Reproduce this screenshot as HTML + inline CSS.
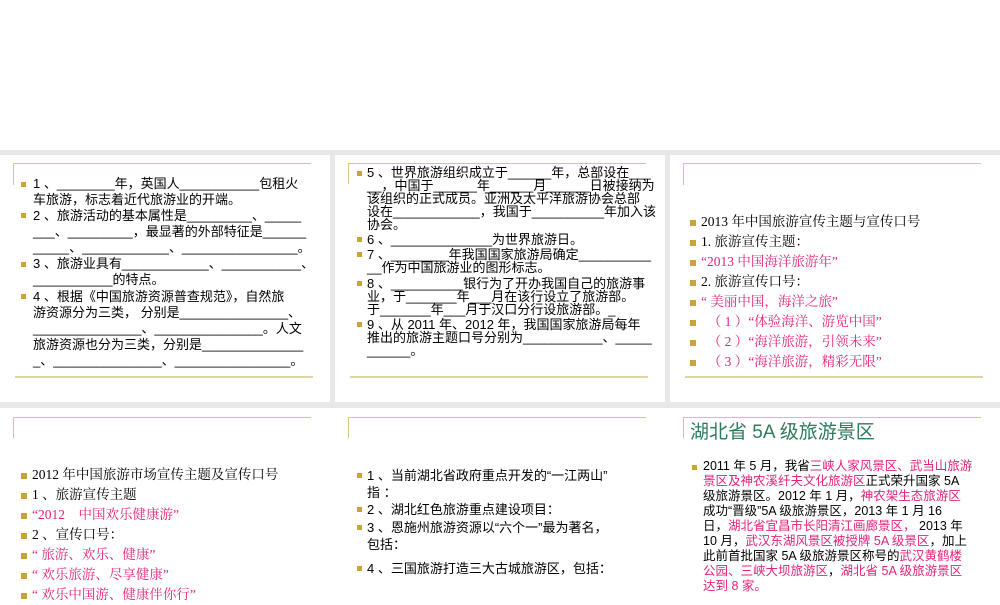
<!DOCTYPE html>
<html><head><meta charset="utf-8"><style>
*{margin:0;padding:0}
body{width:1000px;height:600px;background:#fff;position:relative;overflow:hidden;font-family:"Liberation Sans","Noto Sans CJK SC",sans-serif;color:#000}
.band{position:absolute;background:#e8e8e8}
.s{position:absolute;background:#fff;overflow:hidden}
.tl{position:absolute;height:1px;background:#d9c48a}
.vl{position:absolute;width:1px;background:#d9c48a}
.bl{position:absolute;height:2px;background:#e2d3a6}
.p{position:absolute;font-size:13px;white-space:nowrap}
.b{position:absolute;width:5px;height:5px;background:#c9a436}
.pk{color:#e0247a}
.sf{font-family:"Liberation Serif","Noto Serif CJK SC",serif;font-size:13.5px}
.sq{display:inline-block;width:6px;height:6px;background:#c9a436;vertical-align:middle;margin-right:5px}
</style></head><body>
<div class="band" style="left:0;top:150px;width:1000px;height:258px"></div>
<div class="s" style="left:0;top:155px;width:330px;height:247px"></div>
<div class="s" style="left:335px;top:155px;width:330px;height:247px"></div>
<div class="s" style="left:670px;top:155px;width:330px;height:247px"></div>
<div class="s" style="left:0;top:408px;width:330px;height:192px"></div>
<div class="s" style="left:335px;top:408px;width:330px;height:192px"></div>
<div class="s" style="left:670px;top:408px;width:330px;height:192px"></div>

<!-- slide 1 -->
<div class="tl" style="left:13px;top:163px;width:298px"></div><div class="vl" style="left:13px;top:163px;height:22px"></div>
<div class="bl" style="left:15px;top:376px;width:298px"></div>
<div class="b" style="left:21px;top:182px"></div><div class="b" style="left:21px;top:213px"></div><div class="b" style="left:21px;top:262px"></div><div class="b" style="left:21px;top:294px"></div>
<div class="p" style="left:33px;top:176px;line-height:16px">1 、________年，英国人___________包租火<br>车旅游，标志着近代旅游业的开端。</div>
<div class="p" style="left:33px;top:208px;line-height:16px">2 、旅游活动的基本属性是_________、_____<br>___、_________，最显著的外部特征是______<br>_____、____________、________________。</div>
<div class="p" style="left:33px;top:256px;line-height:16px">3 、旅游业具有____________、___________、<br>___________的特点。</div>
<div class="p" style="left:33px;top:289px;line-height:16px">4 、根据《中国旅游资源普查规范》，自然旅<br>游资源分为三类， 分别是_______________、<br>_______________、_______________。人文<br>旅游资源也分为三类，分别是______________<br>_、_______________、________________。</div>

<!-- slide 2 -->
<div class="tl" style="left:348px;top:163px;width:298px"></div><div class="vl" style="left:348px;top:163px;height:21px"></div>
<div class="bl" style="left:350px;top:376px;width:298px"></div>
<div class="b" style="left:357px;top:171px"></div><div class="b" style="left:357px;top:237px"></div><div class="b" style="left:357px;top:252px"></div><div class="b" style="left:357px;top:281px"></div><div class="b" style="left:357px;top:322px"></div>
<div class="p" style="left:367px;top:166px;line-height:13px">5 、世界旅游组织成立于______年，总部设在___<br>__，中国于______年______月______日被接纳为<br>该组织的正式成员。亚洲及太平洋旅游协会总部<br>设在____________，我国于__________年加入该<br>协会。</div>
<div class="p" style="left:367px;top:233px;line-height:13px">6 、______________为世界旅游日。</div>
<div class="p" style="left:367px;top:248px;line-height:13px">7 、________年我国国家旅游局确定__________<br>__作为中国旅游业的图形标志。</div>
<div class="p" style="left:367px;top:277px;line-height:13px">8 、__________银行为了开办我国自己的旅游事<br>业，于_______年___月在该行设立了旅游部。<br>于_______年___月于汉口分行设旅游部。_</div>
<div class="p" style="left:367px;top:318px;line-height:13px">9 、从 2011 年、2012 年，我国国家旅游局每年<br>推出的旅游主题口号分别为___________、_____<br>______。</div>

<!-- slide 3 -->
<div class="tl" style="left:683px;top:163px;width:298px"></div><div class="vl" style="left:683px;top:163px;height:22px"></div>
<div class="bl" style="left:685px;top:376px;width:298px"></div>
<div class="p sf" style="left:690px;top:212px;line-height:20px">
<span class="sq"></span>2013 年中国旅游宣传主题与宣传口号<br>
<span class="sq"></span>1. 旅游宣传主题：<br>
<span class="sq"></span><span class="pk">“2013 中国海洋旅游年”</span><br>
<span class="sq"></span>2. 旅游宣传口号：<br>
<span class="sq"></span><span class="pk">“ 美丽中国，海洋之旅”</span><br>
<span class="sq"></span><span class="pk">&nbsp;&nbsp;（ 1 ）“体验海洋、游览中国”</span><br>
<span class="sq"></span><span class="pk">&nbsp;&nbsp;（ 2 ）“海洋旅游，引领未来”</span><br>
<span class="sq"></span><span class="pk">&nbsp;&nbsp;（ 3 ）“海洋旅游，精彩无限”</span></div>

<!-- slide 4 -->
<div class="tl" style="left:13px;top:417px;width:298px"></div><div class="vl" style="left:13px;top:417px;height:21px"></div>
<div class="p sf" style="left:21px;top:465px;line-height:20px">
<span class="sq"></span>2012 年中国旅游市场宣传主题及宣传口号<br>
<span class="sq"></span>1 、旅游宣传主题<br>
<span class="sq"></span><span class="pk">“2012　中国欢乐健康游”</span><br>
<span class="sq"></span>2 、宣传口号：<br>
<span class="sq"></span><span class="pk">“ 旅游、欢乐、健康”</span><br>
<span class="sq"></span><span class="pk">“ 欢乐旅游、尽享健康”</span><br>
<span class="sq"></span><span class="pk">“ 欢乐中国游、健康伴你行”</span></div>

<!-- slide 5 -->
<div class="tl" style="left:348px;top:417px;width:298px"></div><div class="vl" style="left:348px;top:417px;height:21px"></div>
<div class="b" style="left:357px;top:473px"></div><div class="b" style="left:357px;top:507px"></div><div class="b" style="left:357px;top:525px"></div><div class="b" style="left:357px;top:566px"></div>
<div class="p" style="left:367px;top:467px;line-height:17px">1 、当前湖北省政府重点开发的“一江两山”<br>指 ：</div>
<div class="p" style="left:367px;top:501px;line-height:17px">2 、湖北红色旅游重点建设项目：</div>
<div class="p" style="left:367px;top:519px;line-height:17px">3 、恩施州旅游资源以“六个一”最为著名，<br>包括：</div>
<div class="p" style="left:367px;top:560px;line-height:17px">4 、三国旅游打造三大古城旅游区，包括：</div>

<!-- slide 6 -->
<div class="tl" style="left:683px;top:417px;width:298px"></div><div class="vl" style="left:683px;top:417px;height:21px"></div>
<div class="p" style="left:690px;top:420px;font-size:19px;line-height:25px;color:#2e7a5a">湖北省 5A 级旅游景区</div>
<div class="b" style="left:692px;top:465px"></div>
<div class="p" style="left:703px;top:459px;line-height:15px;font-size:12.5px">2011 年 5 月，我省<span class="pk">三峡人家风景区、武当山旅游</span><br><span class="pk">景区及神农溪纤夫文化旅游区</span>正式荣升国家 5A<br>级旅游景区。2012 年 1 月，<span class="pk">神农架生态旅游区</span><br>成功“晋级”5A 级旅游景区，2013 年 1 月 16<br>日，<span class="pk">湖北省宜昌市长阳清江画廊景区，</span> 2013 年<br>10 月，<span class="pk">武汉东湖风景区被授牌 5A 级景区</span>，加上<br>此前首批国家 5A 级旅游景区称号的<span class="pk">武汉黄鹤楼</span><br><span class="pk">公园、三峡大坝旅游区</span>，<span class="pk">湖北省 5A 级旅游景区</span><br><span class="pk">达到 8 家。</span></div>
</body></html>
